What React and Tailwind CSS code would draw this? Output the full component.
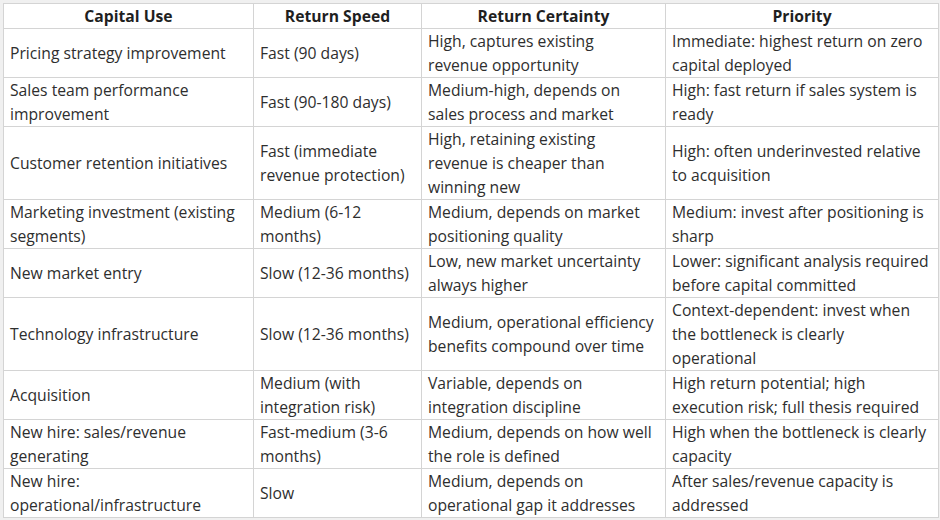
const rows = [
  ['Pricing strategy improvement', 'Fast (90 days)', 'High, captures existing\nrevenue opportunity', 'Immediate: highest return on zero capital deployed'],
  ['Sales team performance improvement', 'Fast (90-180 days)', 'Medium-high, depends on sales process and market', 'High: fast return if sales system is ready'],
  ['Customer retention initiatives', 'Fast (immediate revenue protection)', 'High, retaining existing revenue is cheaper than winning new', 'High: often underinvested relative to acquisition'],
  ['Marketing investment (existing segments)', 'Medium (6-12 months)', 'Medium, depends on market positioning quality', 'Medium: invest after positioning is sharp'],
  ['New market entry', 'Slow (12-36 months)', 'Low, new market uncertainty always higher', 'Lower: significant analysis required before capital committed'],
  ['Technology infrastructure', 'Slow (12-36 months)', 'Medium, operational efficiency benefits compound over time', 'Context-dependent: invest when the bottleneck is clearly operational'],
  ['Acquisition', 'Medium (with integration risk)', 'Variable, depends on integration discipline', 'High return potential; high execution risk; full thesis required'],
  ['New hire: sales/revenue generating', 'Fast-medium (3-6 months)', 'Medium, depends on how well the role is defined', 'High when the bottleneck is clearly capacity'],
  ['New hire: operational/infrastructure', 'Slow', 'Medium, depends on operational gap it addresses', 'After sales/revenue capacity is addressed'],
];

const headers = ['Capital Use', 'Return Speed', 'Return Certainty', 'Priority'];
const widths = ['w-[250px]', 'w-[168px]', 'w-[244px]', 'w-[273px]'];

export default function App() {
  return (
    <div
      className="min-h-screen w-[940px] h-[520px] bg-[#f0f0f0] pt-[3px] pl-[3px]"
      style={{ fontFamily: '"Segoe UI", "Open Sans", "Noto Sans", sans-serif' }}
    >
      <table className="table-fixed border-collapse bg-white w-[935px] text-[15.7px] text-[#2e2e2e]">
        <colgroup>
          {widths.map((w, i) => (
            <col key={i} className={w} />
          ))}
        </colgroup>
        <thead>
          <tr>
            {headers.map((h) => (
              <th key={h} className="border border-[#d4d4d4] px-1.5 py-0 leading-6 font-bold text-[#1f1f1f] text-center">
                {h}
              </th>
            ))}
          </tr>
        </thead>
        <tbody>
          {rows.map((r, i) => (
            <tr key={i}>
              {r.map((c, j) => (
                <td key={j} className="border border-[#d4d4d4] px-[6px] py-0 leading-6 align-middle whitespace-pre-line">
                  {c}
                </td>
              ))}
            </tr>
          ))}
        </tbody>
      </table>
    </div>
  );
}
